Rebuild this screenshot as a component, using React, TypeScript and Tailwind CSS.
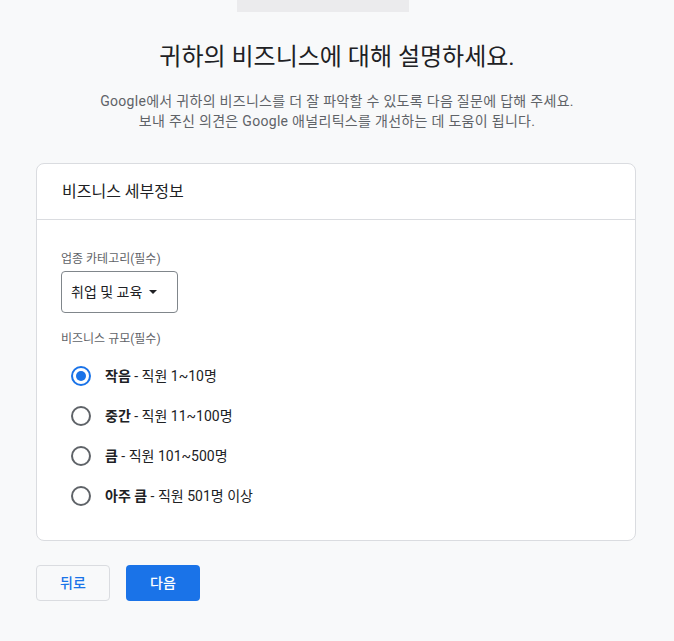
import React, { useState } from "react";

const font = { fontFamily: 'Roboto, "Noto Sans CJK KR", sans-serif' };

const options = [
  { b: "작음", r: " - 직원 1~10명" },
  { b: "중간", r: " - 직원 11~100명" },
  { b: "큼", r: " - 직원 101~500명" },
  { b: "아주 큼", r: " - 직원 501명 이상" },
];

export default function App() {
  const [sel, setSel] = useState(0);
  return (
    <div className="min-h-[641px] w-[674px] bg-[#f8f9fa] text-[#202124]" style={font}>
      <div className="ml-[237px] h-[12px] w-[172px] bg-[#ebebed]" />
      <h1 className="mt-[29px] text-center text-[24px] leading-[32px] font-normal text-[#202124]">
        귀하의 비즈니스에 대해 설명하세요.
      </h1>
      <div className="mt-[18px] text-center text-[14px] leading-[20px] tracking-[0.3px] text-[#5f6368]">
        <p>Google에서 귀하의 비즈니스를 더 잘 파악할 수 있도록 다음 질문에 답해 주세요.</p>
        <p>보내 주신 의견은 Google 애널리틱스를 개선하는 데 도움이 됩니다.</p>
      </div>
      <div className="ml-[36px] mt-[32px] w-[600px] rounded-[8px] border border-[#dadce0] bg-white">
        <div className="flex h-[56px] items-center border-b border-[#dadce0] px-[25px] text-[16px]">
          비즈니스 세부정보
        </div>
        <div className="px-[24px] pt-[31px] pb-[24px]">
          <div className="text-[12px] leading-[16px] text-[#5f6368]">업종 카테고리(필수)</div>
          <div className="mt-[4px] flex h-[42px] w-[117px] items-center rounded-[4px] border border-[#80868b] px-[9px] text-[14px]">
            취업 및 교육
            <svg width="8" height="4" viewBox="0 0 8 4" className="ml-[7px]">
              <path d="M0 0 L8 0 L4 4 Z" fill="#202124" />
            </svg>
          </div>
          <div className="mt-[18px] text-[12px] leading-[16px] text-[#5f6368]">비즈니스 규모(필수)</div>
          <div className="mt-[9px] flex flex-col">
            {options.map((o, i) => (
              <button
                key={i}
                onClick={() => setSel(i)}
                className="flex h-[40px] items-center text-left"
              >
                <span className="flex h-[40px] w-[40px] items-center justify-center">
                  <span
                    className={
                      sel === i
                        ? "flex h-[20px] w-[20px] items-center justify-center rounded-full border-2 border-[#1a73e8]"
                        : "flex h-[20px] w-[20px] items-center justify-center rounded-full border-2 border-[#5f6368]"
                    }
                  >
                    {sel === i && <span className="h-[10px] w-[10px] rounded-full bg-[#1a73e8]" />}
                  </span>
                </span>
                <span className="ml-[4px] text-[14px] text-[#202124]">
                  <span className="font-bold">{o.b}</span>
                  {o.r}
                </span>
              </button>
            ))}
          </div>
        </div>
      </div>
      <div className="ml-[36px] mt-[24px] flex gap-[16px]">
        <button className="h-[36px] w-[74px] rounded-[4px] border border-[#dadce0] text-[14px] font-medium text-[#1a73e8]">
          뒤로
        </button>
        <button className="h-[36px] w-[74px] rounded-[4px] bg-[#1a73e8] text-[14px] font-medium text-white">
          다음
        </button>
      </div>
    </div>
  );
}
